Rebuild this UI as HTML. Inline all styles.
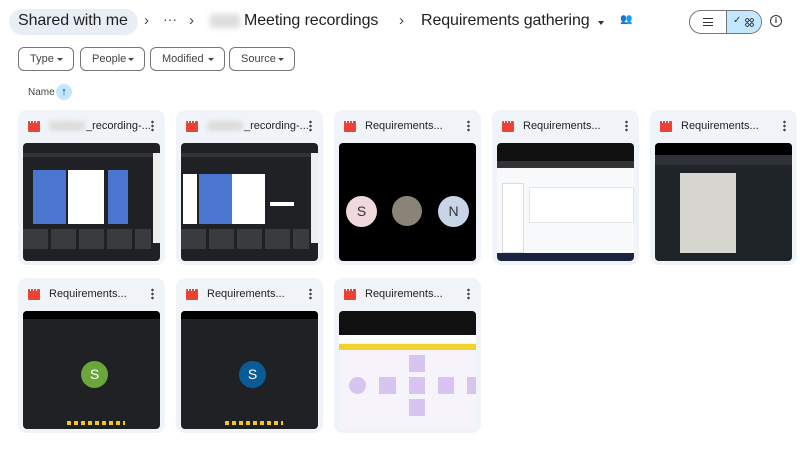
<!DOCTYPE html>
<html><head><meta charset="utf-8"><style>
*{margin:0;padding:0;box-sizing:border-box}
body{width:800px;height:450px;background:#fff;font-family:"Liberation Sans",Arial,sans-serif;position:relative;overflow:hidden;color:#1f1f1f}
.a{position:absolute}
.bc{font-size:16px;letter-spacing:-0.1px;white-space:nowrap}
.chip{position:absolute;top:47px;height:24px;border:1px solid #747775;border-radius:6px;font-size:11px;line-height:22px;padding-left:11px;color:#444}
.chip:after{content:"";position:absolute;right:10px;top:10px;border-left:3px solid transparent;border-right:3px solid transparent;border-top:3px solid #444}
.card{position:absolute;width:147px;height:155px;background:#f0f4f9;border-radius:9px}
.card .ic{position:absolute;left:10px;top:11px;width:12px;height:11px;background:#ea4335;border-radius:1px}
.card .ic:before{content:"";position:absolute;left:2px;top:0;width:8px;height:2px;background:repeating-linear-gradient(90deg,#fff 0 1px,transparent 1px 3px)}
.card .t{position:absolute;left:31px;top:10px;font-size:11px;color:#1f1f1f;white-space:nowrap}
.card .m{position:absolute;right:11px;top:10px;width:3px;height:12px;background:radial-gradient(circle,#444 1.2px,transparent 1.4px) 0 0/3px 4px}
.card .th{position:absolute;left:5px;top:33px;width:137px;height:118px;background:#202124;border-radius:4px;overflow:hidden}
.blur{display:inline-block;width:36px;height:10px;background:#ddd;border-radius:3px;filter:blur(2px);vertical-align:middle;margin-right:1px}
.av{position:absolute;border-radius:50%;color:#fff;text-align:center;font-size:14px}
</style></head><body>
<div class="a" style="left:9px;top:9px;width:129px;height:26px;background:#e9eef6;border-radius:13px"></div>
<div class="a bc" style="left:18px;top:12px">Shared with me</div>
<div class="a" style="left:144px;top:12px;font-size:15px;color:#444">›</div>
<div class="a" style="left:163px;top:11px;font-size:14px;color:#444">···</div>
<div class="a" style="left:189px;top:12px;font-size:15px;color:#444">›</div>
<div class="a" style="left:210px;top:14px;width:30px;height:14px;background:#ddd;filter:blur(3px)"></div>
<div class="a bc" style="left:244px;top:12px">Meeting recordings</div>
<div class="a" style="left:399px;top:12px;font-size:15px;color:#444">›</div>
<div class="a bc" style="left:421px;top:12px">Requirements gathering</div>
<div class="a" style="left:598px;top:21px;border-left:3px solid transparent;border-right:3px solid transparent;border-top:4px solid #333"></div>
<div class="a" style="left:620px;top:14px;font-size:10px;color:#444">&#128101;</div>
<div class="a" style="left:689px;top:10px;width:73px;height:24px;border:1px solid #747775;border-radius:12px;overflow:hidden">
 <div class="a" style="left:36px;top:0;width:37px;height:24px;background:#c2e7ff;border-left:1px solid #747775"></div>
 <div class="a" style="left:13px;top:7px;width:10px;height:8px;border-top:1.5px solid #333;border-bottom:1.5px solid #333"></div>
 <div class="a" style="left:13px;top:10.5px;width:10px;height:1.5px;background:#333"></div>
 <div class="a" style="left:43px;top:4px;font-size:10px;color:#333">✓</div>
 <div class="a" style="left:55px;top:7px;width:9px;height:9px;background:radial-gradient(circle,transparent 1px,#333 1.3px,#333 2px,transparent 2.2px) 0 0/4.5px 4.5px"></div>
</div>
<div class="a" style="left:770px;top:15px;width:12px;height:12px;border:1.5px solid #333;border-radius:50%;font-size:8px;text-align:center;line-height:9px;font-weight:bold">i</div>
<div class="chip" style="left:18px;width:56px">Type</div>
<div class="chip" style="left:80px;width:65px">People</div>
<div class="chip" style="left:150px;width:75px">Modified</div>
<div class="chip" style="left:229px;width:66px">Source</div>
<div class="a" style="left:28px;top:87px;font-size:10px;color:#444">Name</div>
<div class="a" style="left:56px;top:84px;width:16px;height:16px;background:#c2e7ff;border-radius:50%;text-align:center;font-size:11px;line-height:16px;font-weight:bold;color:#0b2f55">↑</div>

<div class="card" style="left:18px;top:110px"><div class="ic"></div><div class="t"><span class="blur"></span>_recording-...</div><div class="m"></div>
<div class="th"><div class="a" style="left:0;top:10px;width:130px;height:4px;background:#333"></div><div class="a" style="left:10px;top:27px;width:33px;height:54px;background:#4a76d0"></div><div class="a" style="left:45px;top:27px;width:36px;height:54px;background:#fff"></div><div class="a" style="left:85px;top:27px;width:20px;height:54px;background:#4a76d0"></div><div class="a" style="left:130px;top:10px;width:7px;height:90px;background:#eee"></div><div class="a" style="left:0;top:86px;width:128px;height:20px;background:repeating-linear-gradient(90deg,#3a3b3e 0 25px,#202124 25px 28px)"></div></div></div>

<div class="card" style="left:176px;top:110px"><div class="ic"></div><div class="t"><span class="blur"></span>_recording-...</div><div class="m"></div>
<div class="th"><div class="a" style="left:0;top:10px;width:130px;height:4px;background:#333"></div><div class="a" style="left:2px;top:31px;width:14px;height:50px;background:#fff"></div><div class="a" style="left:18px;top:31px;width:33px;height:50px;background:#4a76d0"></div><div class="a" style="left:51px;top:31px;width:33px;height:50px;background:#fff"></div><div class="a" style="left:89px;top:59px;width:24px;height:4px;background:#fff"></div><div class="a" style="left:130px;top:10px;width:7px;height:90px;background:#eee"></div><div class="a" style="left:0;top:86px;width:128px;height:20px;background:repeating-linear-gradient(90deg,#3a3b3e 0 25px,#202124 25px 28px)"></div></div></div>

<div class="card" style="left:334px;top:110px"><div class="ic"></div><div class="t">Requirements...</div><div class="m"></div>
<div class="th" style="background:#000"><div class="av" style="left:7px;top:53px;width:31px;height:31px;background:#f0d8dc;color:#333;line-height:31px">S</div><div class="av" style="left:53px;top:53px;width:30px;height:30px;background:#8a8478"></div><div class="av" style="left:99px;top:53px;width:31px;height:31px;background:#c8d4e8;color:#333;line-height:31px">N</div></div></div>

<div class="card" style="left:492px;top:110px"><div class="ic"></div><div class="t">Requirements...</div><div class="m"></div>
<div class="th" style="background:#f8f9fb"><div class="a" style="left:0;top:0;width:137px;height:18px;background:#111"></div><div class="a" style="left:0;top:18px;width:137px;height:7px;background:#333"></div><div class="a" style="left:5px;top:40px;width:22px;height:70px;background:#fff;border:1px solid #ddd"></div><div class="a" style="left:32px;top:44px;width:105px;height:36px;background:#fff;border:1px solid #e4e4e4"></div><div class="a" style="left:0;top:110px;width:137px;height:8px;background:#1a2440"></div></div></div>

<div class="card" style="left:650px;top:110px"><div class="ic"></div><div class="t">Requirements...</div><div class="m"></div>
<div class="th" style="background:#1e2327"><div class="a" style="left:0;top:0;width:137px;height:12px;background:#000"></div><div class="a" style="left:0;top:12px;width:137px;height:10px;background:#2e3236"></div><div class="a" style="left:25px;top:30px;width:56px;height:80px;background:#d8d6d0"></div></div></div>

<div class="card" style="left:18px;top:278px"><div class="ic"></div><div class="t">Requirements...</div><div class="m"></div>
<div class="th"><div class="a" style="left:0;top:0;width:137px;height:8px;background:#000"></div><div class="av" style="left:58px;top:50px;width:27px;height:27px;background:#6aa63a;line-height:27px">S</div><div class="a" style="left:44px;top:110px;width:58px;height:4px;background:repeating-linear-gradient(90deg,#f3c623 0 4px,transparent 4px 7px)"></div></div></div>

<div class="card" style="left:176px;top:278px"><div class="ic"></div><div class="t">Requirements...</div><div class="m"></div>
<div class="th"><div class="a" style="left:0;top:0;width:137px;height:8px;background:#000"></div><div class="av" style="left:58px;top:50px;width:27px;height:27px;background:#0b5c96;line-height:27px">S</div><div class="a" style="left:44px;top:110px;width:58px;height:4px;background:repeating-linear-gradient(90deg,#f3c623 0 4px,transparent 4px 7px)"></div></div></div>

<div class="card" style="left:334px;top:278px"><div class="ic"></div><div class="t">Requirements...</div><div class="m"></div>
<div class="th" style="background:#f7f3fb"><div class="a" style="left:0;top:0;width:137px;height:24px;background:#111"></div><div class="a" style="left:0;top:24px;width:137px;height:8px;background:#fff"></div><div class="a" style="left:0;top:33px;width:137px;height:6px;background:#f2d22e"></div><div class="a" style="left:10px;top:66px;width:17px;height:17px;border-radius:50%;background:#d8c4f0"></div><div class="a" style="left:40px;top:66px;width:17px;height:17px;background:#d8c4f0"></div><div class="a" style="left:70px;top:44px;width:16px;height:17px;background:#d8c4f0"></div><div class="a" style="left:70px;top:66px;width:16px;height:17px;background:#d8c4f0"></div><div class="a" style="left:70px;top:88px;width:16px;height:17px;background:#d8c4f0"></div><div class="a" style="left:99px;top:66px;width:16px;height:17px;background:#d8c4f0"></div><div class="a" style="left:128px;top:66px;width:9px;height:17px;background:#d8c4f0"></div></div></div>
</body></html>
